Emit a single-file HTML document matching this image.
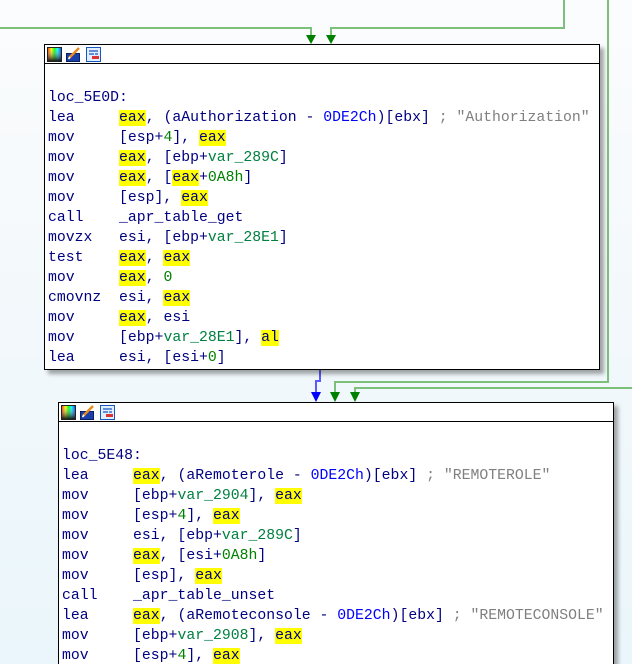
<!DOCTYPE html>
<html><head><meta charset="utf-8"><style>
*{margin:0;padding:0;box-sizing:border-box}
html{width:632px;height:664px;overflow:hidden}
body{width:632px;height:664px;overflow:hidden;position:relative;background:linear-gradient(#fbfcfd 0%,#f2f8fb 50%,#eaf6fb 100%);font-family:"Liberation Mono",monospace;}
.blk{position:absolute;background:#fff;border:1px solid #000;box-shadow:4px 4px 4px rgba(0,0,0,0.35);}
.hdr{height:19px;border-bottom:1px solid #000;position:relative;}
.ic{position:absolute;top:2px;width:15px;height:15px;}
.code{position:absolute;font-size:14.8px;line-height:20px;color:#000080;white-space:pre;}
.y{background:#ffff00}
.v{color:#008040}
.n{color:#0000ff}
.g{color:#008000}
.c{color:#808080}
</style></head><body>
<svg width="632" height="664" style="position:absolute;left:0;top:0">
<g fill="none" stroke="#7cc07c" stroke-width="2">
<polyline points="0,28 311,28 311,38"/>
<polyline points="564,0 564,28 331,28 331,38"/>
<polyline points="608,0 608,382 335,382 335,396"/>
<polyline points="632,388 355,388 355,396"/>
</g>
<polyline points="320,369 320,381 316,381 316,396" fill="none" stroke="#5a5aff" stroke-width="2"/>
<g fill="#008000">
<polygon points="306,35 316,35 311,44"/>
<polygon points="326,35 336,35 331,44"/>
<polygon points="330,392 340,392 335,402"/>
<polygon points="350,392 360,392 355,402"/>
</g>
<polygon points="311,392 321,392 316,402" fill="#0000ff"/>
</svg>

<div class="blk" style="left:44px;top:44px;width:556px;height:326px">
<div class="hdr">
<svg class="ic" style="left:2px" viewBox="0 0 15 15"><defs><linearGradient id="a" x1="0" x2="1"><stop offset="0" stop-color="#f00"/><stop offset=".3" stop-color="#ff0"/><stop offset=".5" stop-color="#0f0"/><stop offset=".7" stop-color="#0ff"/><stop offset="1" stop-color="#00f"/></linearGradient><linearGradient id="b" x1="0" y1="0" x2="0" y2="1"><stop offset="0" stop-color="#fff" stop-opacity="0"/><stop offset="1" stop-color="#000"/></linearGradient></defs><rect width="15" height="15" fill="url(#a)"/><rect width="15" height="15" fill="url(#b)"/><rect x=".5" y=".5" width="14" height="14" fill="none" stroke="#222"/></svg>
<svg class="ic" style="left:21px" viewBox="0 0 15 15"><rect x="0.5" y="6.5" width="13" height="8" fill="#1a3fa8" stroke="#0a1f60"/><line x1="3" y1="11" x2="13" y2="1" stroke="#e88a20" stroke-width="2.5"/><line x1="2.5" y1="12" x2="4" y2="10" stroke="#fff" stroke-width="1.5"/></svg>
<svg class="ic" style="left:41px" viewBox="0 0 15 15"><rect x=".5" y=".5" width="14" height="14" fill="#dfefff" stroke="#1a55c0"/><path d="M3 4h9M3 7h5M9 7h3" stroke="#1a55c0" stroke-width="1.2"/><rect x="6" y="9" width="7" height="3" fill="#d33"/></svg>
</div>
<div class="code" style="left:3px;top:43px">loc_5E0D:
lea     <span class="y">eax</span>, (aAuthorization - <span class="n">0DE2Ch</span>)[ebx] <span class="c">; "Authorization"</span>
mov     [esp+<span class="g">4</span>], <span class="y">eax</span>
mov     <span class="y">eax</span>, [ebp+<span class="v">var_289C</span>]
mov     <span class="y">eax</span>, [<span class="y">eax</span>+<span class="g">0A8h</span>]
mov     [esp], <span class="y">eax</span>
call    _apr_table_get
movzx   esi, [ebp+<span class="v">var_28E1</span>]
test    <span class="y">eax</span>, <span class="y">eax</span>
mov     <span class="y">eax</span>, <span class="g">0</span>
cmovnz  esi, <span class="y">eax</span>
mov     <span class="y">eax</span>, esi
mov     [ebp+<span class="v">var_28E1</span>], <span class="y">al</span>
lea     esi, [esi+<span class="g">0</span>]</div>
</div>

<div class="blk" style="left:58px;top:402px;width:556px;height:280px">
<div class="hdr">
<svg class="ic" style="left:2px" viewBox="0 0 15 15"><rect width="15" height="15" fill="url(#a)"/><rect width="15" height="15" fill="url(#b)"/><rect x=".5" y=".5" width="14" height="14" fill="none" stroke="#222"/></svg>
<svg class="ic" style="left:21px" viewBox="0 0 15 15"><rect x="0.5" y="6.5" width="13" height="8" fill="#1a3fa8" stroke="#0a1f60"/><line x1="3" y1="11" x2="13" y2="1" stroke="#e88a20" stroke-width="2.5"/><line x1="2.5" y1="12" x2="4" y2="10" stroke="#fff" stroke-width="1.5"/></svg>
<svg class="ic" style="left:41px" viewBox="0 0 15 15"><rect x=".5" y=".5" width="14" height="14" fill="#dfefff" stroke="#1a55c0"/><path d="M3 4h9M3 7h5M9 7h3" stroke="#1a55c0" stroke-width="1.2"/><rect x="6" y="9" width="7" height="3" fill="#d33"/></svg>
</div>
<div class="code" style="left:3px;top:43px">loc_5E48:
lea     <span class="y">eax</span>, (aRemoterole - <span class="n">0DE2Ch</span>)[ebx] <span class="c">; "REMOTEROLE"</span>
mov     [ebp+<span class="v">var_2904</span>], <span class="y">eax</span>
mov     [esp+<span class="g">4</span>], <span class="y">eax</span>
mov     esi, [ebp+<span class="v">var_289C</span>]
mov     <span class="y">eax</span>, [esi+<span class="g">0A8h</span>]
mov     [esp], <span class="y">eax</span>
call    _apr_table_unset
lea     <span class="y">eax</span>, (aRemoteconsole - <span class="n">0DE2Ch</span>)[ebx] <span class="c">; "REMOTECONSOLE"</span>
mov     [ebp+<span class="v">var_2908</span>], <span class="y">eax</span>
mov     [esp+<span class="g">4</span>], <span class="y">eax</span></div>
</div>
</body></html>
